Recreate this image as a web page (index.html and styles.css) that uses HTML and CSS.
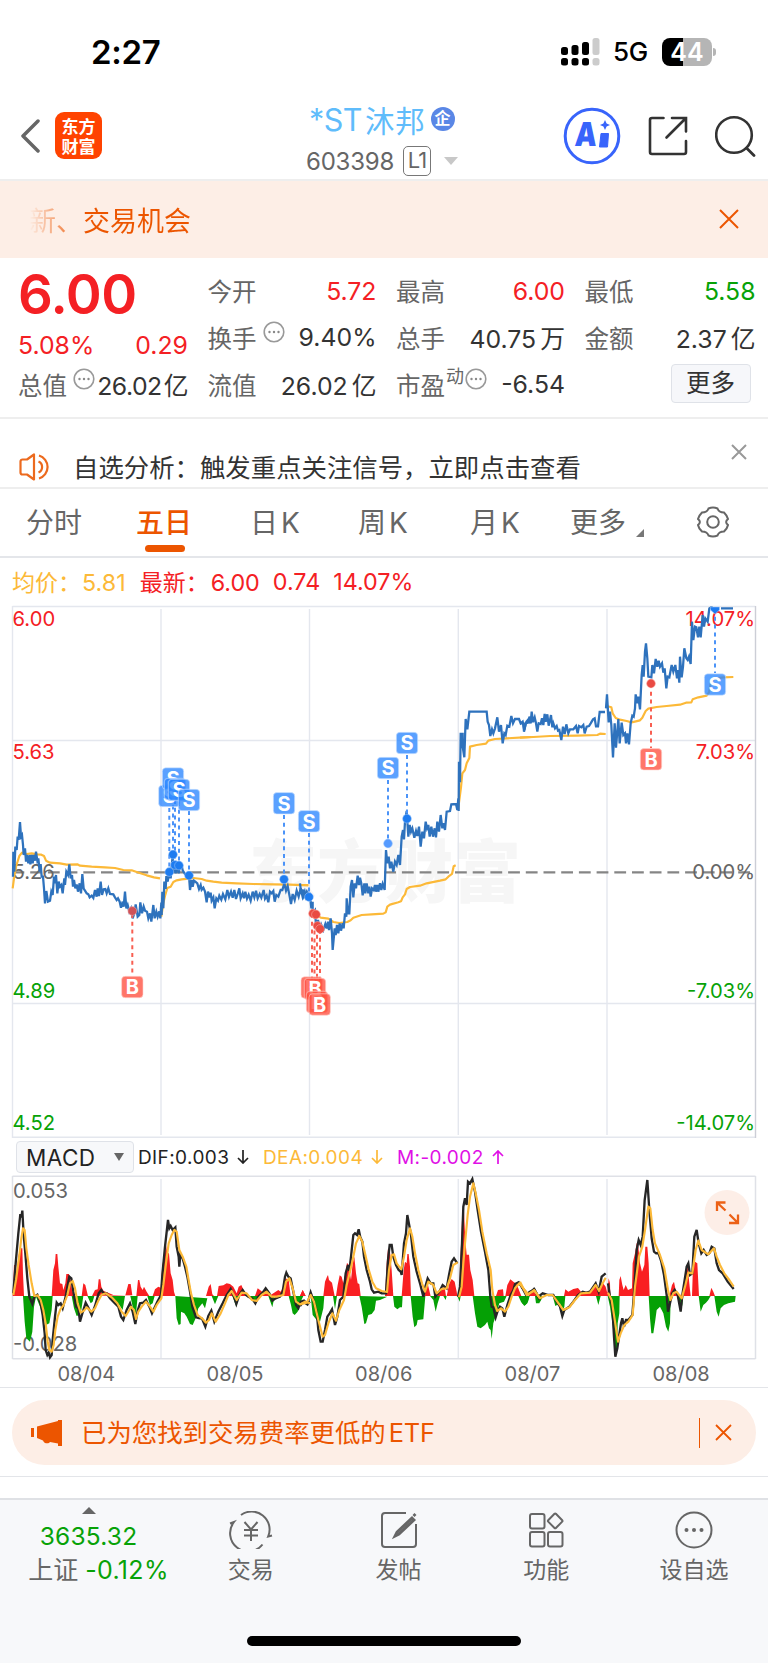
FILE: index.html
```html
<!DOCTYPE html>
<html lang="zh-CN">
<head>
<meta charset="utf-8">
<title>*ST沐邦 603398</title>
<link rel="stylesheet" href="styles.css">
</head>
<body>
<div class="status">
  <span class="time">2:27</span>
  <div class="status-right">
    <svg class="signal" width="40" height="28" viewBox="0 0 40 28">
      <g fill="#000"><rect x="0" y="9" width="7" height="8" rx="2.500"/><rect x="10.500" y="7" width="7" height="10" rx="2.500"/><rect x="21" y="4" width="7" height="13" rx="2.500"/><rect x="0" y="20" width="7" height="7.500" rx="2.500"/><rect x="10.500" y="20" width="7" height="7.500" rx="2.500"/><rect x="21" y="20" width="7" height="7.500" rx="2.500"/></g>
      <g fill="#ccc"><rect x="31.500" y="0" width="7" height="17" rx="2.500"/><rect x="31.500" y="20" width="7" height="7.500" rx="2.500"/></g>
    </svg>
    <span class="net">5G</span>
    <span class="battery"><b>44</b><i></i></span>
  </div>
</div>
<header class="head">
  <svg class="back" width="20" height="34" viewBox="0 0 20 34"><path d="M18 2 3 17l15 15" fill="none" stroke="#666" stroke-width="3.500" stroke-linecap="round" stroke-linejoin="round"/></svg>
  <div class="logo"><span>东方</span><span>财富</span></div>
  <div class="title">
    <div class="name"><span class="latin">*ST</span><span>沐邦</span><i class="firm">企</i></div>
    <div class="code"><span>603398</span><b>L1</b><svg width="14" height="8" viewBox="0 0 14 8"><path d="M0 0h14L7 8z" fill="#c8c8c8"/></svg></div>
  </div>
  <div class="actions">
    <svg width="58" height="58" viewBox="0 0 58 58"><circle cx="29" cy="29" r="26.800" fill="none" stroke="#3864fb" stroke-width="3"/><text x="14" y="39" class="ai" transform="skewX(-4)" textLength="22" lengthAdjust="spacingAndGlyphs">A</text><path d="M38 26.500h7.500l-1 13.500h-8z" stroke="#3864fb" stroke-width="1" stroke-linejoin="round" fill="#3864fb"/><path d="m42 13 1.600 3.400 3.400 1.600-3.400 1.600L42 23l-1.600-3.400L37 18l3.400-1.600z" fill="#3864fb"/></svg>
    <svg width="40" height="40" viewBox="0 0 40 40"><path d="M15.500 2H4a2 2 0 0 0-2 2v32a2 2 0 0 0 2 2h32a2 2 0 0 0 2-2V25M24 2h14v13.500M37 3 18.500 21.500" fill="none" stroke="#333" stroke-width="2.600" stroke-linecap="round"/></svg>
    <svg width="41" height="42" viewBox="0 0 41 42"><circle cx="19" cy="20" r="17.800" fill="none" stroke="#333" stroke-width="2.600"/><path d="m31.500 33 7.500 7.500" stroke="#333" stroke-width="2.800" stroke-linecap="round"/></svg>
  </div>
</header>
<div class="promo"><span class="fade">新、交易机会</span><svg width="20" height="20" viewBox="0 0 20 20"><path d="m1 1 18 18M19 1 1 19" stroke="#ec5500" stroke-width="2"/></svg></div>
<section class="quote">
  <div class="price">6.00</div>
  <div class="cell r1"><label>今开</label><b class="up">5.72</b></div>
  <div class="cell r1"><label>最高</label><b class="up">6.00</b></div>
  <div class="cell r1"><label>最低</label><b class="down">5.58</b></div>
  <div class="cell chg"><b class="up">5.08%</b><b class="up">0.29</b></div>
  <div class="cell"><label>换手<svg class="dots" viewBox="0 0 22 22"><use href="#dots"/></svg></label><b>9.40%</b></div>
  <div class="cell"><label>总手</label><b>40.75<em>万</em></b></div>
  <div class="cell"><label>金额</label><b>2.37<em>亿</em></b></div>
  <div class="cell tight"><label>总值<svg class="dots" viewBox="0 0 22 22"><use href="#dots"/></svg></label><b>26.02<em>亿</em></b></div>
  <div class="cell"><label>流值</label><b>26.02<em>亿</em></b></div>
  <div class="cell"><label>市盈<sup>动</sup><svg class="dots near" viewBox="0 0 22 22"><use href="#dots"/></svg></label><b>-6.54</b></div>
  <div class="cell end"><button class="more">更多</button></div>
</section>
<div class="notice">
  <svg width="34" height="28" viewBox="0 0 34 28" fill="none" stroke="#ec6a1e" stroke-width="2.200" stroke-linejoin="round"><path d="M15 1.500v25l-7-5H3.500A2 2 0 0 1 1.500 19.500v-11a2 2 0 0 1 2-2H8z"/><path d="M19.500 8.500a6 6 0 0 1 0 11M20 2.500a12 12 0 0 1 0 23"/></svg>
  <span>自选分析：触发重点关注信号，立即点击查看</span>
  <svg class="nx" width="16" height="16" viewBox="0 0 16 16"><path d="m1 1 14 14M15 1 1 15" stroke="#999" stroke-width="2"/></svg>
</div>
<nav class="tabs">
  <a>分时</a><a class="on">五日</a><a>日<i>K</i></a><a>周<i>K</i></a><a>月<i>K</i></a><a>更多<svg class="corner" width="8" height="8" viewBox="0 0 8 8"><path d="M8 0v8H0z" fill="#777"/></svg></a>
  <svg class="gear" width="34" height="32" viewBox="-17 -16 34 32" fill="none" stroke="#666" stroke-width="2"><circle r="5.800"/><path d="M-4.500-13.500Q0-15.500 4.500-13.500C5.500-10.500 7-9.500 11-9.500Q14.500-6 15-3C12.500-1 12.500 1 15 3Q14.500 6 11 9.500C7 9.500 5.500 10.500 4.500 13.500Q0 15.500-4.500 13.500C-5.500 10.500-7 9.500-11 9.500Q-14.500 6-15 3C-12.500 1-12.500-1-15-3Q-14.500-6-11-9.500C-7-9.500-5.500-10.500-4.500-13.500Z"/></svg>
</nav>
<div class="legend"><span class="avg">均价：<i>5.81</i></span><span>最新：<i>6.00</i></span><i>0.74</i><i>14.07%</i></div>
<svg class="chart" width="768" height="538" viewBox="0 600 768 538">
  <defs>
    <g id="dots"><circle cx="11" cy="11" r="9.800" fill="none" stroke="#999" stroke-width="1.600"/><g fill="#888"><circle cx="6.500" cy="11" r="1.200"/><circle cx="11" cy="11" r="1.200"/><circle cx="15.500" cy="11" r="1.200"/></g></g>
    <g id="s"><rect x="-10.700" y="-10.700" width="21.400" height="21.400" rx="3.500" fill="#2c86ff" fill-opacity=".78" stroke="#d6e7ff" stroke-width=".6"/><text y="7.300" class="mark">S</text></g>
    <g id="b"><rect x="-10.700" y="-10.700" width="21.400" height="21.400" rx="3.500" fill="#ff4f3f" fill-opacity=".78" stroke="#ffd5d0" stroke-width=".6"/><text y="7.300" class="mark">B</text></g>
  </defs>
  <text x="385" y="897" class="water">东方财富</text>
  <g fill="none" stroke="#e4e7ee" stroke-width="1.400">
    <path d="M12.500 606.500h743M12.500 740.500h743M12.500 1003.500h743M12.500 1137.300h743M12.500 606v532"/>
    <path d="M755.500 606v532" stroke="#ccced6"/><path d="M161 609v526M309.500 609v526M458.300 609v526M607 609v526"/>
  </g>
  <path d="M12.500 872.300H755" stroke="#858585" stroke-width="2.200" stroke-dasharray="11.800 5.900"/>
  <g class="lab">
    <g class="up"><text x="12.500" y="626">6.00</text><text x="12.500" y="758.500">5.63</text><text x="755" y="626" class="r">14.07%</text><text x="755" y="758.500" class="r">7.03%</text></g>
    <g class="mid"><text x="12.500" y="878.500">5.26</text><text x="755" y="878.500" class="r">0.00%</text></g>
    <g class="down"><text x="12.500" y="997.500">4.89</text><text x="755" y="997.500" class="r">-7.03%</text><text x="12.500" y="1130">4.52</text><text x="755" y="1130" class="r">-14.07%</text></g>
  </g>
  <g class="avgline">
    <g transform="translate(0 600) scale(.33333)"><path d="M38 865 42 835 48 800 58 768 66 758 80 762 95 760 112 763 124 764 132 768 138 782 150 788 180 790 200 794 232 793 240 797 275 800 315 802 345 804 370 810 395 811 410 816 440 826 462 832 480 835M484 950 490 910 495 888 502 864 512 860 520 846 530 841 545 838 565 836 580 834 605 837 620 842 640 845 665 848 710 850 760 852 820 853 870 854 925 856"/></g>
    <g transform="translate(300 600) scale(.33333)"><path d="M-5 855H25M40 938 62 953 85 956 100 966 118 969 142 966 152 961 160 953 185 945 215 943 250 941 257 937 262 920 270 914 295 907 303 904 308 892 315 883 320 867 330 861 360 857 380 850 420 842 437 838 445 830 456 822 461 799 467 796M474 630 483 562 487 520 495 510 500 490 508 474 510 440 530 435 558 431 565 422 585 417 620 415 670 412 695 411"/></g>
    <g transform="translate(520 600) scale(.33333)"><path d="M0 413 40 411 90 408 170 407 232 405 240 401 257 402M260 318 274 322 278 340 287 354 300 359 320 363 335 367 360 361 367 353 377 333 385 326 410 321 440 318 480 314 498 308 514 307 518 298 535 292 560 287 567 277 572 250 582 236 610 232 640 231"/></g>
  </g>
  <g class="priceline">
    <g transform="translate(0 600) scale(.33333)"><path d="M39 830 40 755 43 815 46 740 50 750 53 710 56 720 60 666 63 710 66 705 69 735 71 765 75 745 78 785 81 765 85 790 89 765 91 793 95 765 98 790 101 765 105 782 108 755 112 782 115 775 119 815 122 792 125 830 129 830 132 865 135 910 139 873 144 905 150 902 154 875 158 885 162 830 165 850 168 825 172 880 176 845 180 860 184 855 188 880 193 835 195 855 199 815 204 825 208 793 212 835 216 825 219 860 222 840 226 865 230 853 234 875 239 850 243 880 247 822 251 866 255 872 260 880 265 883 269 892 275 887 280 894 285 870 290 890 293 865 297 888 302 845 306 885 311 868 316 867 320 880 325 865 330 882 340 883 345 892 350 900 354 895 359 905 363 923 368 905 371 920 375 875 379 925 383 915 388 935 393 925 398 955 403 940 407 913 413 950 418 945 421 907 426 940 431 920 435 932 441 935 445 955 450 940 454 965 460 915 464 955 469 935 473 950 478 934 481 955 484 908 485 945 487 875 490 925 493 845 497 867 499 828 503 845 508 817 512 835 518 765 520 818 524 790 527 820 531 793 536 820 540 798 545 797 548 811 555 822 560 824 567 828 570 870 575 840 578 860 582 842 586 845 592 850 597 867 602 855 605 869 610 863 615 875 620 907 624 875 629 892 632 878 635 902 640 892 644 925 649 895 654 902 658 887 664 899 669 882 676 898 682 870 687 891 693 875 698 893 703 870 708 897 713 882 718 865 722 895 728 880 732 895 736 875 741 896 746 884 752 902 758 875 763 892 768 872 773 895 779 882 784 893 791 870 795 896 800 887 805 907 810 875 815 880 820 873 824 905 829 885 835 890 842 870 847 870 853 850 858 872 863 858 869 890 873 912 878 882 884 900 890 872 896 890 902 865 908 891 914 875 919 900 924 882 928 892"/></g>
    <g transform="translate(300 600) scale(.33333)"><path d="M0 850 4 882 8 868 12 890 20 875 25 890 30 885 34 925 38 905 38 938 45 930 48 978 54 960 60 995 64 975 70 990 76 972 80 985 84 965 87 990 92 955 96 1000 98 1050 104 985 107 1005 111 975 115 1000 119 970 123 992 128 970 131 985 135 940 139 950 140 895 144 940 148 940 152 860 156 840 160 892 164 850 168 865 173 827 177 855 180 833 184 850 188 886 193 850 196 880 200 850 205 880 208 860 212 890 216 865 221 870 225 855 228 875 232 855 235 875 240 850 244 870 248 852 254 870 258 750 262 790 266 770 270 805 274 785 280 815 285 785 290 795 295 765 300 795 305 710 309 690 312 718 315 665 320 633 325 710 329 675 333 695 337 685 343 713 348 693 352 708 357 680 362 740 367 695 372 715 377 665 381 685 385 675 389 710 394 680 399 710 404 685 408 712 412 665 417 695 422 645 427 685 431 670 435 690 440 635 450 633 454 613 468 612 472 630 475 595 476 633 477 485 480 547 482 402 488 402 488 440 493 472 497 357 502 388 508 335H560L563 365 567 375 571 408 576 388 580 400 585 385 592 352 597 395 603 375 608 430 613 400 617 405 622 377 628 380 634 348 639 370 645 357 657 357 662 370 668 365 673 390 679 365 686 357 690 370"/></g>
    <g transform="translate(520 600) scale(.33333)"><path d="M0 370 10 370 12 395 17 370 24 368 29 350 32 370 35 335 39 366 44 352 48 370 52 395 56 370 62 372 66 355 70 375 74 342 77 365 82 343 86 377 90 360 93 345 97 382 100 370 105 385 110 378 114 392 118 390 124 420 129 380 134 402 139 373 145 400 150 388 160 388 168 378 173 400 177 378 184 382 190 375 194 400 200 380 207 378 212 370 219 358 224 355 228 379 234 379 239 336H255M258 325 261 283 266 367 270 335 274 375 279 472 284 370 288 443 295 357 299 430 305 368 310 405 315 400 318 430 322 400 327 433 332 370 337 347 341 350 345 325 347 283 352 310 355 290 360 328 365 225 368 195 371 230 375 155 378 130 382 175 385 230 394 232 397 195 402 220 407 177 412 200 416 182 420 200 426 190 430 218 434 205 439 265 443 230 448 232 455 195 460 215 466 195 471 235 474 210 478 248 480 170 485 232 489 200 493 145 499 175 503 180 507 170 512 192 516 65 520 120 525 80 529 82 534 112 538 80 542 112 548 45 552 80 556 55 563 65 568 25 573 22 578 23M603 25H639"/></g>
  </g>
  <g class="stem blue"><path d="M169.300 808V872M173 790V854M175 800V865M179 802V865M189 811V875M284 815V879M309 833V897M388 780V843M407 755V819M715 609V673"/></g>
  <g class="stem red"><path d="M132.300 914V976M312 914V980M314.500 915V982M317 927V990M320 930V996M651 684V748"/></g>
  <g fill="#1e7cf0" stroke="#a9cdfd" stroke-width=".5"><circle cx="169.300" cy="872" r="4.400"/><circle cx="173" cy="854.500" r="4.400"/><circle cx="175" cy="865" r="4.400"/><circle cx="179" cy="865.500" r="4.400"/><circle cx="189" cy="875.500" r="4.400"/><circle cx="284" cy="879.300" r="4.400"/><circle cx="309" cy="897" r="4.400"/><circle cx="388" cy="843.500" r="4.400" fill="#569bff"/><circle cx="407" cy="818.700" r="4.400"/><path d="M710.500 607h9v3l-4.500 4-4.500-4z"/></g>
  <g fill="#e94b43" stroke="#ffb8b2" stroke-width=".5"><circle cx="132.300" cy="911" r="4.400" fill="#cf5258"/><circle cx="313" cy="913.500" r="4.400"/><circle cx="316" cy="914.500" r="4.400"/><circle cx="317.500" cy="926" r="4.400"/><circle cx="320" cy="929" r="4.400"/><circle cx="651" cy="683.500" r="4.400"/></g>
  <use href="#s" x="169.300" y="796"/><use href="#s" x="173" y="778.500"/><use href="#s" x="175" y="789"/><use href="#s" x="179" y="790"/><use href="#s" x="189" y="800"/><use href="#s" x="284" y="803.300"/><use href="#s" x="309" y="821.300"/><use href="#s" x="388" y="768"/><use href="#s" x="407" y="743"/><use href="#s" x="715" y="684.500"/>
  <use href="#b" x="132.300" y="987"/><use href="#b" x="311.700" y="987.500"/><use href="#b" x="315" y="989"/><use href="#b" x="317" y="1002"/><use href="#b" x="319.700" y="1004.500"/><use href="#b" x="651" y="759.300"/>
</svg>
<div class="indicator"><button>MACD<svg width="10" height="8" viewBox="0 0 10 8"><path d="M0 0h10L5 8z" fill="#666"/></svg></button>
  <span>DIF:0.003 <svg class="arr" viewBox="0 0 12 14"><path d="M6 0v13M1 8l5 5 5-5"/></svg></span><span class="dea">DEA:0.004 <svg class="arr" viewBox="0 0 12 14"><path d="M6 0v13M1 8l5 5 5-5"/></svg></span><span class="m">M:-0.002 <svg class="arr" viewBox="0 0 12 14"><path d="M6 14V1M1 6l5-5 5 5"/></svg></span></div>
<svg class="macd" width="768" height="185" viewBox="0 1175 768 185">
  <g fill="none" stroke="#dfe1e7" stroke-width="1.500"><path d="M12.500 1176.300h743M12.500 1358.700h743M12.500 1176v183M755.500 1176v183"/><path d="M161 1179v179M309.500 1179v179M458.300 1179v179M607 1179v179" stroke="#e6e9ef"/></g>
  <g class="lab mid"><text x="13" y="1197.500">0.053</text><text x="13" y="1351">-0.028</text></g>
  <g fill="#f91f22">
    <g transform="translate(0 1120) scale(.33333)"><path d="M38 528 42 435H47L50 460 55 410 60 385H67L69 460 72 528zM155 528 160 450 165 430 167 402H172L175 440 180 490 187 492 190 510 196 490 199 462H207L211 475 216 510 222 528zM245 528 250 490 256 495 264 528zM276 528 285 510 293 508 296 478H301L304 500 310 512 340 525 376 526 385 492H392L397 526M409 528 414 480H418L422 500 428 510 432 500 440 515 448 528M458 528 465 508 475 500 482 503 487 435 495 400 498 375 502 400H507L512 460 518 480 522 515 526 528M618 528 626 500 632 492 637 523 642 528M651 528 656 498 670 496 680 490 690 492 700 500 710 520 716 500 724 495 733 515 745 528M765 528 773 505 780 510 790 518 800 505 812 525 835 510 842 515 850 500 857 475 866 480 872 528M900 528 908 510 917 528"/></g>
    <g transform="translate(300 1120) scale(.33333)"><path d="M0 528 8 510 17 528M70 528 75 485 81 470 84 465 87 480 96 488 104 528M108 528 113 495 119 466 125 470 130 490 135 465 141 428 146 435 150 460 153 480 158 430 163 410 168 460 173 490 178 492 182 528M255 528 260 430 264 385 270 395 275 450 280 528M305 528 311 450 315 425 320 430 322 402H326L330 440 333 528M372 528 379 490 384 495 392 528M412 528 420 507 428 510 433 495 438 528M440 528 448 490 455 477 464 485 470 515 472 528M478 528 480 440 485 330 487 272H492L496 360 500 404H507L511 450 518 480 523 528M588 528 594 510 609 508 611 528M616 528 622 495 631 478 640 485 650 492 659 515 664 528M685 528 694 510 705 515 713 528"/></g>
    <g transform="translate(520 1120) scale(.33333)"><path d="M30 528 40 510 50 528M132 528 136 508 145 515 160 507 174 504 183 515 208 520 218 510 226 490 235 515 240 495 248 488 257 500 262 520 266 475 270 490 271 528M296 528 298 480 302 468 307 495 311 510 317 495 324 510 336 505 338 430 345 400 350 370 354 370 360 430 366 455 373 435 376 380H382L386 430 389 528M448 528 456 495 462 485 468 515 476 522 490 528 497 460 502 430 509 500 512 528M516 528 519 440 525 425 532 430 537 528M568 528 574 503 580 515 585 528"/></g>
  </g>
  <g fill="#05a005">
    <g transform="translate(0 1120) scale(.33333)"><path d="M69 528 74 605 79 655 90 665 97 635 102 560 108 530 120 560 130 590 138 615 148 610 155 570 158 528M215 528 222 565 230 588 238 585 244 570 250 528M262 528 272 550 278 545 283 528M325 528 345 545 358 555 368 570 375 528M391 528 398 560 408 582 413 528M442 528 450 555 458 550 464 528M526 528 530 595 536 615 542 612 543 575 553 580 560 590 570 612 578 615 587 595 595 565 607 550 615 565 622 535M635 528 645 553 655 528M697 528 709 560 717 528M740 528 763 545 775 528M805 528 817 562 824 528M866 528 873 555 878 580 884 585 893 575 900 550 910 528"/></g>
    <g transform="translate(300 1120) scale(.33333)"><path d="M32 528 38 585 50 600 60 605 70 565 73 528M99 528 105 568 111 528M178 528 185 560 193 612 198 610 205 585 215 582 224 570 228 542 240 540 262 530M279 528 283 560 292 568 300 562 306 562 308 528M332 528 338 590 343 622 350 615 353 600 370 598 376 528M390 528 400 540 407 575 413 550 420 528M430 528 437 540 440 528M472 528 479 545 482 528M518 528 525 580 532 620 542 625 555 615 562 605 567 625 572 630 575 657 580 610 588 585 598 550 612 545 620 528M655 528 663 545 673 558 682 550 688 528M710 528 720 545 730 528"/></g>
    <g transform="translate(520 1120) scale(.33333)"><path d="M0 528 6 550 16 555 24 545 29 528M45 528 48 550 58 550 68 528M98 528 106 558 120 550 127 575 133 560 136 528M228 528 235 555 242 528M263 528 270 560 278 615 284 690 292 690 293 610 298 580 299 528M386 528 390 595 394 640 400 640 406 600 410 570 420 560 430 580 438 620 445 635 450 610 452 540 460 528M472 528 481 575 487 555 490 528M536 528 542 575 550 555 558 548 565 540 572 528M583 528 590 575 596 590 602 565 612 555 625 550 645 545 647 528"/></g>
  </g>
  <g class="dif">
    <g transform="translate(0 1120) scale(.33333)"><path d="M40 520 47 430 55 340 61 282 64 292 67 272 71 345 76 400 82 475 88 530 97 552 103 530 112 524 122 550 128 585 134 640 137 690 142 705 146 698 150 712 155 705 158 660 165 590 170 548 175 555 182 550 188 565 197 530 204 490 208 470 214 475 220 515 228 560 235 565 240 605 247 580 257 548 266 565 275 585 285 558 296 520 304 510 311 520 320 520 330 535 345 550 355 560 363 590 370 600 380 570 390 550 398 575 406 612 413 572 420 550 430 548 438 540 448 560 456 580 463 565 472 545 483 525 487 465 495 380 504 300 508 325 512 318 518 330 526 322 530 380 536 410 538 440 541 405 548 415 555 440 562 470 570 515 577 560 588 592 597 594 606 596 616 620 625 588 634 572 643 605 655 575 668 550 680 525 692 507 702 530 709 552 718 525 728 510 738 525 745 530 756 535 766 550 775 530 788 518 797 505 808 520 817 542 827 535 840 530 848 515 855 470 859 458 865 470 872 475 880 515 888 555 895 565 902 545 912 542 922 552 930 545"/></g>
    <g transform="translate(300 1120) scale(.33333)"><path d="M0 558 10 545 22 553 32 517 40 540 50 575 55 630 62 665 68 665 75 630 82 590 89 580 96 568 105 615 112 590 120 540 130 530 137 460 144 435 148 452 153 410 160 345 165 340 171 345 176 328 181 352 187 365 192 410 200 450 210 485 215 508 222 518 235 515 245 520 258 520 264 420 269 375 275 375 280 410 288 435 296 450 302 455 305 465 312 370 318 340 322 285 327 312 333 345 340 410 350 455 360 490 365 510 370 530 376 500 383 475 392 490 400 490 406 530 418 515 428 495 440 505 447 465 455 425 462 415 472 430M474 530 480 500 486 370 490 260 495 235 500 255 504 185 510 190 517 177 525 215 533 270 543 335 555 395 565 450 571 530 575 560 580 562 587 592 594 570 600 560 607 565 613 590 622 555 632 525 640 510 645 492 656 487 668 505 680 520 693 517 702 507 720 540"/></g>
    <g transform="translate(520 1120) scale(.33333)"><path d="M0 490 18 525 30 515 43 508 55 530 68 520 85 525 100 525 110 545 120 560 127 588 133 570 148 560 160 545 174 525 188 515 198 518 210 515 227 490 236 515 245 470 257 460M264 490 270 530 277 560 282 650 286 710 292 685 297 650 303 610 307 595 312 620 318 600 325 600 337 585 342 520 350 390 356 360 362 375 368 350 374 240 382 180 388 270 395 355 402 395 408 400 415 398 424 425 432 465 440 525 444 575 450 550 457 520 464 510 473 525 482 575 487 525 494 480 500 440 505 430 510 465 517 460 523 350 530 330 536 370 544 400 551 390 560 405 568 400 575 380 583 385 590 430 597 450 608 460 623 485 641 507"/></g>
  </g>
  <g class="avgline">
    <g transform="translate(0 1120) scale(.33333)"><path d="M40 525 48 480 57 415 64 355 69 325 74 330 79 385 86 435 95 490 103 528 113 526 122 540 130 570 137 610 143 665 148 690 155 695 161 675 166 630 173 590 181 568 191 555 202 525 210 490 218 483 225 505 233 550 242 578 252 572 260 562 274 575 285 565 295 542 305 524 318 520 335 532 352 550 365 575 377 588 388 570 393 560 402 570 408 597 415 575 425 560 438 545 450 560 460 575 470 555 484 535 490 495 498 430 506 370 515 345 523 330 530 335 538 390 548 410 559 440 565 475 573 520 582 555 593 585 606 595 618 608 627 600 635 580 647 605 662 580 675 550 685 525 695 513 710 540 725 518 740 520 756 540 770 543 785 525 800 515 815 530 830 530 850 525 858 485 868 475 878 505 888 545 900 553 915 545 930 550"/></g>
    <g transform="translate(300 1120) scale(.33333)"><path d="M0 553 20 548 32 525 42 545 55 600 68 650 75 645 85 610 97 580 108 602 118 570 132 540 140 495 150 455 158 420 168 370 178 348 187 365 195 400 205 445 217 485 228 505 245 513 261 516 267 450 275 405 282 403 290 430 304 448 312 410 320 360 330 325 337 350 345 400 355 450 366 490 375 515 385 485 400 495 410 520 425 507 440 505 450 475 460 435 473 427M477 532 485 500 490 430 495 370 503 285 510 230 520 190 527 220 537 270 547 335 560 400 572 450 577 510 585 555 592 573 603 565 615 575 625 560 635 530 645 505 658 490 670 505 685 523 702 510 720 535"/></g>
    <g transform="translate(520 1120) scale(.33333)"><path d="M0 485 20 525 43 512 60 535 80 525 98 525 112 545 130 570 148 562 165 540 183 520 210 518 227 495 237 513 248 490 257 473M264 518 275 540 285 605 294 665 302 640 313 615 325 605 338 585 345 500 357 410 367 380 375 330 385 260 391 265 398 330 405 370 420 405 433 445 444 510 451 540 460 520 470 515 485 535 495 500 505 458 517 460 527 390 535 362 545 390 565 403 582 385 590 410 600 435 613 460 628 480 641 500"/></g>
  </g>
  <circle cx="727" cy="1212.500" r="22.500" fill="#fdeee7"/><path d="M717 1211v-8.500h8.500M717.500 1203l8 7.500M738 1214.500v8.500h-9M737.500 1222.500l-8-8" fill="none" stroke="#ec6116" stroke-width="2.300"/>
</svg>
<div class="dates"><span>08/04</span><span>08/05</span><span>08/06</span><span>08/07</span><span>08/08</span></div>
<div class="etfwrap"><div class="etf">
  <svg width="32" height="26" viewBox="0 0 32 26" fill="#ec5500"><path d="M0 8h3v9H0zM6 6.500 27 1V0h4v26h-4v-2.500l-8-1.500c-1 2-6 2-7-1.500L6 18z"/></svg>
  <span>已为您找到交易费率更低的<i>ETF</i></span><hr><svg width="17" height="17" viewBox="0 0 17 17"><path d="m1 1 15 15M16 1 1 16" stroke="#ec5500" stroke-width="1.800"/></svg>
</div></div>
<footer class="bar">
  <div class="index"><svg width="14" height="7" viewBox="0 0 14 7"><path d="m7 0 7 7H0z" fill="#666"/></svg><b>3635.32</b><span>上证 <b>-0.12%</b></span></div>
  <div class="item"><svg width="44" height="38" viewBox="-1 0 44 38"><path d="M11 4A18 18 0 0 1 38.200 25.500L42 24.500M32.500 33.500A18 18 0 0 1 4 11L0 12.500M14.500 11l6.500 7.500 6.500-7.500M21 18.500v11.500M14 19h14M14 24.500h14"/></svg><span>交易</span></div>
  <div class="item"><svg width="38" height="38" viewBox="0 0 38 38"><path d="M26 2H5a3 3 0 0 0-3 3v28a3 3 0 0 0 3 3h28a3 3 0 0 0 3-3V13"/><path d="m32 7 2 2-15 14-4 2 2-4zM33.500 5l2-2" stroke-width="2.800"/></svg><span>发帖</span></div>
  <div class="item"><svg width="36" height="36" viewBox="0 0 36 36"><rect x="2" y="2" width="14.500" height="14.500" rx="2"/><rect x="2" y="20" width="14.500" height="14.500" rx="2"/><rect x="20" y="20" width="14.500" height="14.500" rx="2"/><path d="M26.500 1.800q.7-.7 1.400 0l6.300 6.400q.7.700 0 1.400l-6.300 6.400q-.7.700-1.400 0l-6.300-6.400q-.7-.7 0-1.400z"/></svg><span>功能</span></div>
  <div class="item"><svg width="38" height="38" viewBox="0 0 38 38"><circle cx="19" cy="19" r="17.500"/><g fill="#666" stroke="none"><circle cx="11.500" cy="19" r="2"/><circle cx="19" cy="19" r="2"/><circle cx="26.500" cy="19" r="2"/></g></svg><span>设自选</span></div>
  <div class="home"></div>
</footer>
</body>
</html>
```
FILE: styles.css
```css
* { box-sizing: border-box; }
body { margin: 0; width: 768px; height: 1663px; overflow: hidden; background: #fff; color: #333; font-family: Inter, "Noto Sans CJK SC", sans-serif; }
i, em { font-style: normal; }
svg { display: block; flex: none; }
button { font: inherit; color: inherit; }
.up { color: #f42024; }
.down { color: #07a207; }

.status { height: 95px; padding: 8px 56px 0 91px; display: flex; align-items: center; justify-content: space-between; color: #000; }
.time { font-size: 33px; font-weight: 600; letter-spacing: -.3px; }
.status-right { display: flex; align-items: center; }
.net { font-size: 26px; margin: 0 14px 0 12px; width: 35px; letter-spacing: -.4px; font-weight: 500; }
.battery { position: relative; width: 50px; height: 28px; border-radius: 8px; background: linear-gradient(90deg, #000 43%, #b5b5b5 43%); color: #fff; font-size: 25px; line-height: 28px; text-align: center; }
.battery b { font-weight: 600; }
.battery i { position: absolute; left: 51px; top: 10px; width: 3px; height: 8px; border-radius: 0 3px 3px 0; background: #b5b5b5; }

.head { height: 86px; border-bottom: 2px solid #eee; display: flex; padding: 9px 11px 0 20px; align-items: flex-start; }
.back { margin-top: 15px; }
.logo { width: 47px; height: 47px; margin: 8px 0 0 15px; border-radius: 9px; background: #ff4300; color: #fff; font: 700 17px/20px "Noto Sans CJK SC", sans-serif; display: flex; flex-direction: column; align-items: center; justify-content: center; }
.title { margin-left: 204px; width: 160px; }
.name { display: flex; align-items: center; height: 30px; font-size: 29.500px; color: #5fbcfb; white-space: nowrap; margin-left: 3px; letter-spacing: .8px; }
.latin { width: 56px; font-size: 30.500px; letter-spacing: -.5px; }
.firm { width: 24px; height: 24px; border-radius: 50%; margin-left: 5px; background: #5a87e6; color: #fff; font-size: 16px; line-height: 23px; text-align: center; font-weight: 700; letter-spacing: 0; }
.code { display: flex; align-items: center; height: 30px; margin-top: 12px; font-size: 24px; color: #666; }
.code span { width: 97px; letter-spacing: -.2px; }
.code b { width: 28px; height: 30px; border: 1.500px solid #777; border-radius: 5px; font-size: 22px; line-height: 27px; text-align: center; font-weight: 400; letter-spacing: -1px; }
.code svg { margin-left: 13px; }
.actions { margin: 3px 0 0 97px; display: flex; align-items: center; gap: 27px; }
.ai { font: 900 33px Inter, sans-serif; fill: #3864fb; }

.promo { height: 77px; background: #fdeee6; color: #ec5500; display: flex; align-items: center; justify-content: space-between; padding: 0 29px 2px; font-size: 27px; }
.fade { background: linear-gradient(90deg, #fdeee6, #ec5500 55px); -webkit-background-clip: text; background-clip: text; color: transparent; padding-top: 2px; }

.quote { height: 161px; border-bottom: 2px solid #eee; padding: 6px 13px 0 18px; display: grid; grid-template-columns: 170px 169px 169px 171px; column-gap: 19.500px; grid-template-rows: 51px 47px 47px; }
.price { font-size: 54.500px; font-weight: 600; line-height: 61px; color: #f42024; letter-spacing: -.6px; }
.cell { display: flex; align-items: center; justify-content: space-between; font-size: 24.500px; white-space: nowrap; height: 44px; }
.r1 { padding-top: 3px; height: 50px; }
.cell label { color: #666; display: flex; align-items: center; }
.cell b { font-weight: 400; letter-spacing: 0; font-size: 24.800px; }
.cell em { margin-left: 4px; }
.tight b { letter-spacing: -.5px; }
.tight em { margin-left: 2px; }
.chg { padding-top: 15px; }
.dots { width: 22px; height: 22px; margin: -10px 0 0 6px; }
.near { margin-left: 1px; }
.cell sup { font-size: 18px; line-height: 20px; margin-top: -14px; margin-left: 1px; vertical-align: baseline; }
.end { justify-content: flex-end; padding-right: 5px; }
.more { width: 80px; height: 39px; padding: 0; border: 1.500px solid #dfe2e8; border-radius: 4px; background: #f6f7fa; font-size: 24.500px; line-height: 34px; margin-top: -2px; }

.notice { height: 70px; border-bottom: 2px solid #eee; display: flex; align-items: flex-end; padding: 0 21px 6px 19px; font-size: 25.400px; }
.notice span { margin-left: 20px; line-height: 26px; flex: 1; }
.nx { align-self: flex-start; margin-top: 25px; }

.tabs { height: 69px; border-bottom: 2px solid #e4e6ea; display: grid; grid-template-columns: 110px 114px 108px 112px 100px 87px 54px; padding-left: 26px; font-size: 28px; line-height: 69px; color: #666; }
.tabs a { white-space: nowrap; position: relative; }
.tabs a i { margin-left: 3px; font-size: 28px; }
.tabs .on { color: #ec5500; font-weight: 500; }
.on::after { content: ""; position: absolute; left: 9px; top: 56px; width: 40px; height: 7px; border-radius: 4px; background: #ec5500; }
.corner { position: absolute; left: 66px; top: 40px; }
.gear { margin: 17px 0 0 39px; }

.legend { height: 42px; padding: 4px 12px 0; display: flex; gap: 14px; align-items: center; color: #f42024; font-size: 23px; white-space: nowrap; }
.legend .avg { color: #fcb938; }
.legend i { letter-spacing: 0; font-size: 23.300px; margin-left: 1px; }
.legend > i { margin-left: -1px; }
.legend span + span i { margin-left: 2px; }
.lab text { font-size: 20.200px; }
.lab .r { text-anchor: end; }
.lab .up { fill: #f42024; }
.lab .down { fill: #07a207; }
.mid { fill: #666; }
.water { font: 900 68px "Noto Sans CJK SC", sans-serif; fill: #f6f6f6; text-anchor: middle; }
.mark { font: 700 20px Inter, sans-serif; fill: #fff; text-anchor: middle; }
.avgline path { fill: none; stroke: #fcb938; stroke-width: 6.500; stroke-linejoin: round; }
.priceline path { fill: none; stroke: #2e72bd; stroke-width: 6.800; stroke-linejoin: miter; }
.dif path { fill: none; stroke: #262626; stroke-width: 7; }
.stem path { fill: none; stroke-width: 2; stroke-dasharray: 4 3.800; }
.blue path { stroke: #4b93f8; }
.red path { stroke: #f85f52; }

.indicator { height: 37px; padding: 3px 0 2px 16px; display: flex; align-items: center; font-size: 19px; white-space: nowrap; color: #222; }
.indicator button { width: 118px; height: 32px; border: 1.500px solid #dfe2e8; border-radius: 4px; background: #f7f8fa; padding: 0 9px; font-size: 22.500px; letter-spacing: .4px; display: flex; align-items: center; justify-content: space-between; }
.indicator span { display: flex; align-items: center; gap: 8px; margin-left: 4px; width: 121px; letter-spacing: .4px; }
.indicator .dea { color: #fcb938; width: 130px; }
.indicator .m { color: #e010e6; }
.arr { width: 12px; height: 14px; fill: none; stroke: currentColor; stroke-width: 1.700; }
.dates { height: 27px; margin: 0 12px; display: grid; grid-template-columns: repeat(5, 148.700px); text-align: center; font-size: 20px; line-height: 28px; color: #666; }
.etfwrap { height: 90px; border-top: 1.500px solid #e3e5e9; border-bottom: 1.500px solid #e3e5e9; padding: 12px 12px; }
.etf { height: 65px; border-radius: 33px; background: #fdeee6; color: #ec5500; display: flex; align-items: center; padding: 0 24px 0 19px; font-size: 25.400px; }
.etf span { margin: -4px 0 0 18px; flex: 1; }
.etf i { margin-left: 3px; letter-spacing: -.2px; }
.etf hr { width: 1.500px; height: 30px; border: 0; background: #ec5500; margin: 0 15px 0 0; }

.bar { position: relative; margin-top: 21px; height: 166px; border-top: 2px solid #dfe1e5; background: #f7f8fa; display: grid; grid-template-columns: 177px repeat(4, 147.700px); color: #666; font-size: 23px; }
.index { display: flex; flex-direction: column; align-items: center; padding-top: 7px; }
.index b { font-weight: 400; color: #07a207; font-size: 24.500px; line-height: 32px; letter-spacing: .2px; }
.index > b { margin: 6px 0 0; }
.index span { white-space: nowrap; line-height: 36px; font-size: 25px; margin-left: 20px; }
.index span b { letter-spacing: .3px; font-size: 25px; }
.item { display: flex; flex-direction: column; align-items: center; padding-top: 11px; }
.item svg { height: 38px; fill: none; stroke: #666; stroke-width: 2; }
.item span { line-height: 34px; margin-top: 4px; }
.home { position: absolute; left: 247px; top: 136px; width: 274px; height: 10px; border-radius: 5px; background: #000; }
```
